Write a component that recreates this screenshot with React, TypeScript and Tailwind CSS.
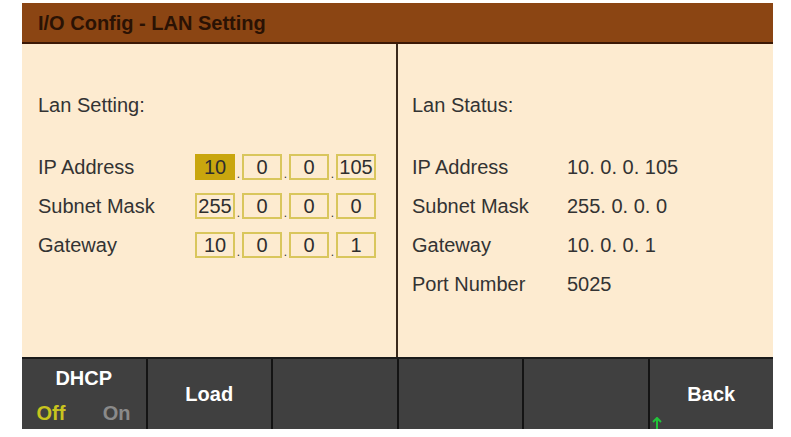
import React from "react";

const Box = ({ v, hl }: { v: string; hl?: boolean }) => (
  <div
    className={`w-[40px] h-[26px] flex items-center justify-center border-2 ${
      hl ? "bg-[#c9a60e] border-[#c9a60e]" : "border-[#d9c65c]"
    } text-[20px] leading-none text-[#2e2e2e]`}
  >
    {v}
  </div>
);

const Dot = () => (
  <div className="w-[7px] h-[26px] flex items-end justify-center text-[12px] leading-none text-[#333]">.</div>
);

const IpRow = ({ label, vals, hl }: { label: string; vals: string[]; hl?: boolean }) => (
  <div className="flex items-center h-[39px]">
    <div className="w-[157px]">{label}</div>
    <div className="flex items-center">
      <Box v={vals[0]} hl={hl} />
      <Dot />
      <Box v={vals[1]} />
      <Dot />
      <Box v={vals[2]} />
      <Dot />
      <Box v={vals[3]} />
    </div>
  </div>
);

const StatRow = ({ label, value }: { label: string; value: string }) => (
  <div className="flex items-center h-[39px]">
    <div className="w-[155px]">{label}</div>
    <div>{value}</div>
  </div>
);

const Btn = ({ children, last }: { children?: React.ReactNode; last?: boolean }) => (
  <div
    className={`relative flex-1 h-full flex items-center justify-center ${
      last ? "" : "border-r-2 border-[#141414]"
    }`}
  >
    {children}
  </div>
);

export default function App() {
  return (
    <div
      className="w-[791px] h-[437px] bg-white pt-[3px] pl-[22px]"
      style={{ fontFamily: '"Liberation Sans", Arial, sans-serif' }}
    >
      <div className="w-[751px] flex flex-col">
        <div className="h-[41px] bg-[#8b4513] border-b-2 border-[#3b1805] flex items-center pl-[16px]">
          <span className="text-[20px] font-bold text-[#2a1204] leading-none">I/O Config - LAN Setting</span>
        </div>
        <div className="h-[313px] bg-[#fdebd0] flex text-[20px] text-[#333333] leading-none">
          <div className="w-[376px] border-r-2 border-[#3a2a1c] pl-[16px] pt-[51px]">
            <div className="h-[20px] flex items-center">Lan Setting:</div>
            <div className="mt-[32px]">
              <IpRow label="IP Address" vals={["10", "0", "0", "105"]} hl />
              <IpRow label="Subnet Mask" vals={["255", "0", "0", "0"]} />
              <IpRow label="Gateway" vals={["10", "0", "0", "1"]} />
            </div>
          </div>
          <div className="flex-1 pl-[14px] pt-[51px]">
            <div className="h-[20px] flex items-center">Lan Status:</div>
            <div className="mt-[32px]">
              <StatRow label="IP Address" value="10. 0. 0. 105" />
              <StatRow label="Subnet Mask" value="255. 0. 0. 0" />
              <StatRow label="Gateway" value="10. 0. 0. 1" />
              <StatRow label="Port Number" value="5025" />
            </div>
          </div>
        </div>
        <div className="h-[72px] bg-[#404040] border-t-2 border-[#1a1a1a] flex text-white font-bold text-[20px] leading-none">
          <Btn>
            <div className="flex flex-col items-center w-full">
              <div className="pt-[2px]">DHCP</div>
              <div className="flex w-full mt-[15px]">
                <span className="flex-1 text-center text-[#c8c41e] pr-[6px]">Off</span>
                <span className="flex-1 text-center text-[#8a8a8a] pl-[2px]">On</span>
              </div>
            </div>
          </Btn>
          <Btn>Load</Btn>
          <Btn />
          <Btn />
          <Btn />
          <Btn last>
            <span>Back</span>
            <svg
              className="absolute left-[2px] bottom-[0px]"
              width="10"
              height="12"
              viewBox="0 0 10 12"
            >
              <path d="M5 1 L5 12 M1 5 L5 1 L9 5" stroke="#22c43a" strokeWidth="2" fill="none" />
            </svg>
          </Btn>
        </div>
      </div>
    </div>
  );
}
